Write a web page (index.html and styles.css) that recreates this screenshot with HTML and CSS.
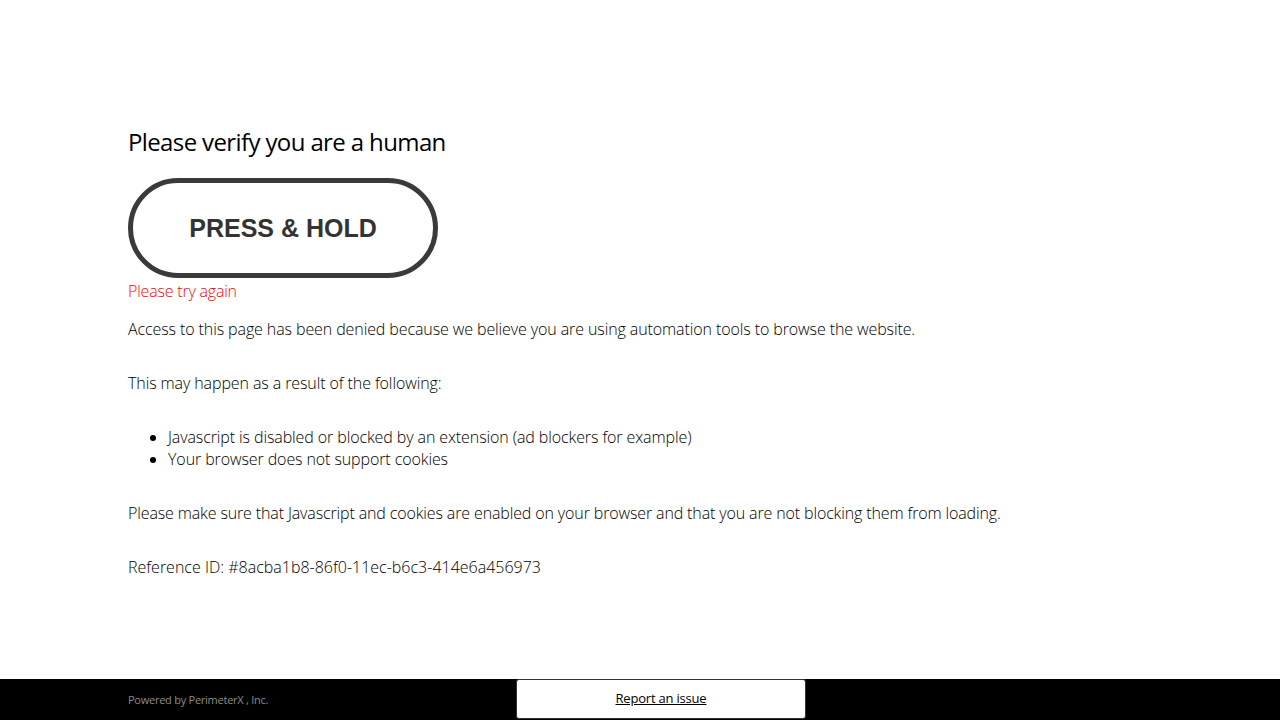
FILE: index.html
```html
<!DOCTYPE html>
<html>
<head>
<meta charset="utf-8">
<link rel="stylesheet" href="styles.css">
</head>
<body>
<div class="page">
  <main class="content">
    <h1 class="title">Please verify you are a human</h1>
    <div class="hold-btn"><span>PRESS &amp; HOLD</span></div>
    <p class="error">Please try again</p>
    <p class="first">Access to this page has been denied because we believe you are using automation tools to browse the website.</p>
    <p>This may happen as a result of the following:</p>
    <ul class="reasons">
      <li>Javascript is disabled or blocked by an extension (ad blockers for example)</li>
      <li>Your browser does not support cookies</li>
    </ul>
    <p class="sure">Please make sure that Javascript and cookies are enabled on your browser and that you are not blocking them from loading.</p>
    <p class="ref">Reference ID: #8acba1b8-86f0-11ec-b6c3-414e6a456973</p>
  </main>
  <footer class="footer">
    <span class="powered">Powered by PerimeterX , Inc.</span>
    <div class="report"><a href="#">Report an issue</a></div>
  </footer>
</div>
</body>
</html>
```
FILE: styles.css
```css
html, body {
  margin: 0;
  padding: 0;
  background: #fff;
}
body {
  font-family: "Open Sans", "Liberation Sans", sans-serif;
  color: #333;
}
.page {
  height: 720px;
  display: flex;
  flex-direction: column;
}
.content {
  flex: 1;
  padding: 126px 0 0 128px;
}
.title {
  margin: 0;
  font-size: 24px;
  line-height: 32px;
  font-weight: 400;
  color: #000;
  letter-spacing: -0.62px;
}
.hold-btn {
  margin-top: 20px;
  width: 300px;
  height: 90px;
  border: 5px solid #3a3a3a;
  border-radius: 50px;
  display: flex;
  align-items: center;
  justify-content: center;
}
.hold-btn span {
  font-family: "Liberation Sans", Arial, sans-serif;
  font-weight: 700;
  font-size: 25px;
  color: #333;
}
p, li {
  font-size: 16px;
  line-height: 22px;
  font-weight: 300;
  color: #000;
  letter-spacing: -0.1px;
}
p {
  margin: 32px 0 0;
}
p.error {
  margin-top: 2px;
  color: #f00;
  letter-spacing: -0.2px;
}
p.first {
  margin-top: 16px;
}
p.sure {
  letter-spacing: -0.13px;
}
p.ref {
  letter-spacing: 0;
}
.reasons {
  margin: 32px 0 0;
  padding-left: 40px;
}
.footer {
  height: 41px;
  background: #000;
  display: flex;
  align-items: center;
  padding-left: 128px;
  position: relative;
}
.powered {
  font-size: 11px;
  font-weight: 400;
  color: #8c8c8c;
  letter-spacing: -0.25px;
}
.report {
  position: absolute;
  left: 516px;
  top: 0;
  width: 288px;
  height: 38px;
  background: #fff;
  border: 1px solid #333;
  border-radius: 3px;
  display: flex;
  align-items: center;
  justify-content: center;
}
.report a {
  font-size: 13px;
  color: #000;
  text-decoration: underline;
  letter-spacing: -0.2px;
  margin-top: -2px;
}
```
